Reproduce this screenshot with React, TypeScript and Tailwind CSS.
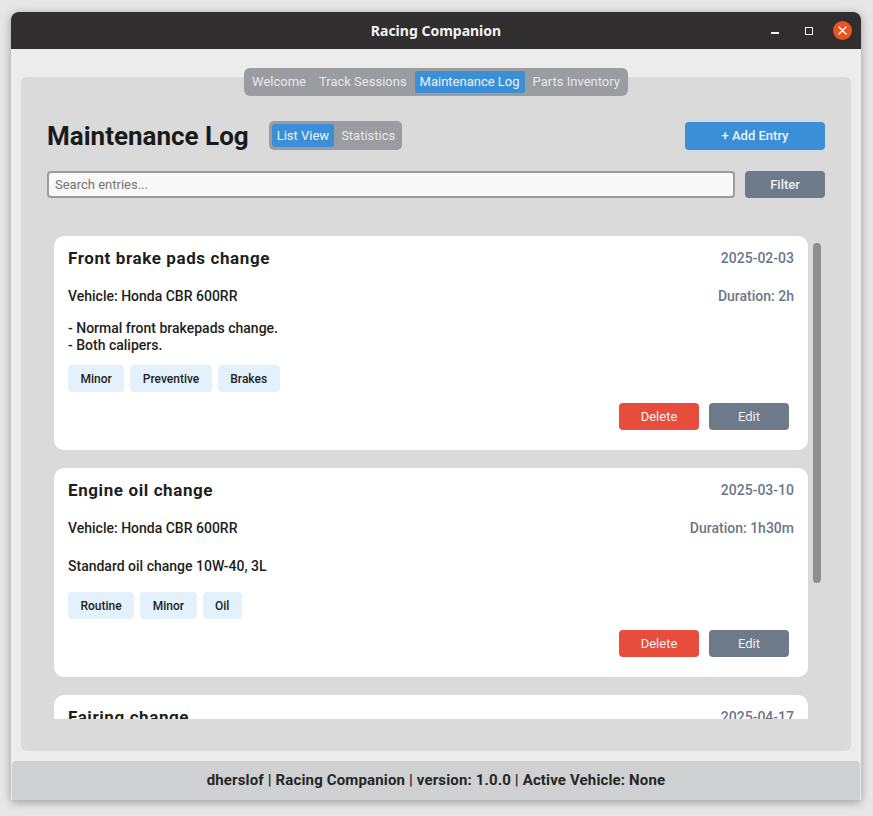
import React from "react";

type Entry = {
  title: string;
  date: string;
  vehicle: string;
  duration: string;
  description: string[];
  tags: string[];
};

const entries: Entry[] = [
  {
    title: "Front brake pads change",
    date: "2025-02-03",
    vehicle: "Honda CBR 600RR",
    duration: "2h",
    description: ["- Normal front brakepads change.", "- Both calipers."],
    tags: ["Minor", "Preventive", "Brakes"],
  },
  {
    title: "Engine oil change",
    date: "2025-03-10",
    vehicle: "Honda CBR 600RR",
    duration: "1h30m",
    description: ["Standard oil change 10W-40, 3L"],
    tags: ["Routine", "Minor", "Oil"],
  },
  {
    title: "Fairing change",
    date: "2025-04-17",
    vehicle: "Honda CBR 600RR",
    duration: "3h",
    description: ["Replaced left side fairing after crash."],
    tags: ["Major", "Bodywork"],
  },
];

const tabs = ["Welcome", "Track Sessions", "Maintenance Log", "Parts Inventory"];

function EntryCard({ entry }: { entry: Entry }) {
  return (
    <div className="bg-white rounded-[10px] pt-[14px] pb-[20px] pl-[14px] pr-[14px] shrink-0">
      {/*Header*/}
      <div className="flex items-center justify-between h-[16px]">
        <h3 className="text-[17px] leading-[16px] font-bold text-[#1e1e1e] tracking-[0.6px]">
          {entry.title}
        </h3>
        <span className="text-[14px] font-medium text-[#6b7788]">{entry.date}</span>
      </div>

      {/*Vehicle*/}
      <div className="flex items-center justify-between mt-[22px] h-[17px] text-[14px] font-medium">
        <span className="text-[#1e1e1e]">Vehicle: {entry.vehicle}</span>
        <span className="text-[#6b7788]">Duration: {entry.duration}</span>
      </div>

      {/*Description*/}
      <div className="mt-[15px] min-h-[29px] flex flex-col justify-center text-[14px] leading-[17px] font-medium text-[#1e1e1e]">
        {entry.description.map((line) => (
          <p key={line}>{line}</p>
        ))}
      </div>

      {/*Tags*/}
      <div className="flex gap-[6px] mt-[11px]">
        {entry.tags.map((tag) => (
          <span
            key={tag}
            className="h-[27px] px-[12.5px] flex items-center rounded-[4px] bg-[#e3f1fd] text-[12px] font-medium text-[#1e1e1e]"
          >
            {tag}
          </span>
        ))}
      </div>

      {/*Buttons*/}
      <div className="flex justify-end gap-[10px] mt-[11px] pr-[5px]">
        <button className="w-[80px] h-[27px] rounded-[4px] bg-[#e74c3c] text-[13px] text-[#f3f3f3]">
          Delete
        </button>
        <button className="w-[80px] h-[27px] rounded-[4px] bg-[#6c7a8a] text-[13px] text-[#f0f0f0]">
          Edit
        </button>
      </div>
    </div>
  );
}

export default function App() {
  return (
    <div className="w-[873px] h-[816px] bg-[#e7e7e7] pt-[12px] pl-[11px] font-['Roboto',sans-serif] overflow-hidden">
      <div className="w-[850px] h-[788px] flex flex-col rounded-t-[8px] overflow-hidden bg-[#ececec] shadow-[0_2px_10px_rgba(0,0,0,0.35)]">
        {/*Title bar*/}
        <div className="h-[37px] shrink-0 bg-[#302e2e] flex items-center relative">
          <span className="flex-1 text-center font-['Noto_Sans',sans-serif] font-bold text-[14px] text-[#f2f2f2]">
            Racing Companion
          </span>
          <div className="absolute right-[9px] top-0 h-[37px] flex items-center">
            <div className="w-[8px] h-[2px] bg-[#f0f0f0] mt-[4px]" />
            <div className="w-[8px] h-[8px] border-[1.5px] border-[#f0f0f0] ml-[26px]" />
            <div className="w-[19px] h-[19px] rounded-full bg-[#e95420] ml-[20px] flex items-center justify-center">
              <svg width="9" height="9" viewBox="0 0 9 9">
                <path d="M1 1L8 8M8 1L1 8" stroke="#ffffff" strokeWidth="1.5" strokeLinecap="round" />
              </svg>
            </div>
          </div>
        </div>

        {/*Content*/}
        <div className="flex-1 flex flex-col px-[10px] pt-[19px]">
          {/*Tabs*/}
          <div className="relative z-10 self-center flex gap-[3px] p-[3px] rounded-[6px] bg-[#9a9ca1]">
            {tabs.map((tab) => (
              <span
                key={tab}
                className={
                  tab === "Maintenance Log"
                    ? "h-[22px] px-[5px] flex items-center rounded-[3px] bg-[#3a8fd6] text-[13px] text-[#eef3fa]"
                    : "h-[22px] px-[5px] flex items-center rounded-[3px] text-[13px] text-[#e6e8ec]"
                }
              >
                {tab}
              </span>
            ))}
          </div>

          {/*Panel*/}
          <div className="-mt-[19px] h-[674px] rounded-[6px] bg-[#dadada] pt-[44px] px-[26px] pb-[32px] flex flex-col">
            {/*Header row*/}
            <div className="flex items-center h-[29px]">
              <h1 className="text-[26px] font-bold text-[#1a1a1a] leading-none">Maintenance Log</h1>
              <div className="ml-[20px] flex gap-[3px] p-[3px] rounded-[5px] bg-[#9a9ca1] h-[29px]">
                <span className="h-[23px] px-[5px] flex items-center rounded-[3px] bg-[#3a8fd6] text-[13px] text-[#eef3fa]">
                  List View
                </span>
                <span className="h-[23px] px-[4px] flex items-center text-[13px] text-[#e6e8ec]">
                  Statistics
                </span>
              </div>
              <button className="ml-auto w-[140px] h-[28px] rounded-[4px] bg-[#3a8fd6] text-[13px] font-medium text-[#eef3fa]">
                + Add Entry
              </button>
            </div>

            {/*Search row*/}
            <div className="flex mt-[21px] h-[27px] gap-[10px]">
              <input
                placeholder="Search entries..."
                className="flex-1 h-[27px] rounded-[4px] border-2 border-[#9a9ca1] bg-[#f8f8f8] px-[6px] text-[13px] text-[#333] placeholder:text-[#747474] outline-none"
              />
              <button className="w-[80px] h-[27px] rounded-[4px] bg-[#6c7a8a] text-[13px] font-medium text-[#eceff2]">
                Filter
              </button>
            </div>

            {/*List*/}
            <div className="mt-[14px] h-[507px] flex overflow-hidden">
              <div className="flex-1 flex flex-col gap-[18px] pl-[7px] pt-[24px]">
                {entries.map((entry) => (
                  <EntryCard key={entry.title} entry={entry} />
                ))}
              </div>
              <div className="w-[8px] h-[340px] mt-[31px] ml-[5px] mr-[4px] rounded-full bg-[#8e8e8e] shrink-0" />
            </div>
          </div>

          <div className="h-[10px] shrink-0" />
        </div>

        {/*Footer*/}
        <div className="h-[39px] shrink-0 mx-[1px] rounded-t-[4px] bg-[#cfd1d2] flex items-center justify-center text-[15px] font-bold text-[#262626] tracking-[0.15px]">
          dherslof | Racing Companion | version: 1.0.0 | Active Vehicle: None
        </div>
      </div>
    </div>
  );
}
